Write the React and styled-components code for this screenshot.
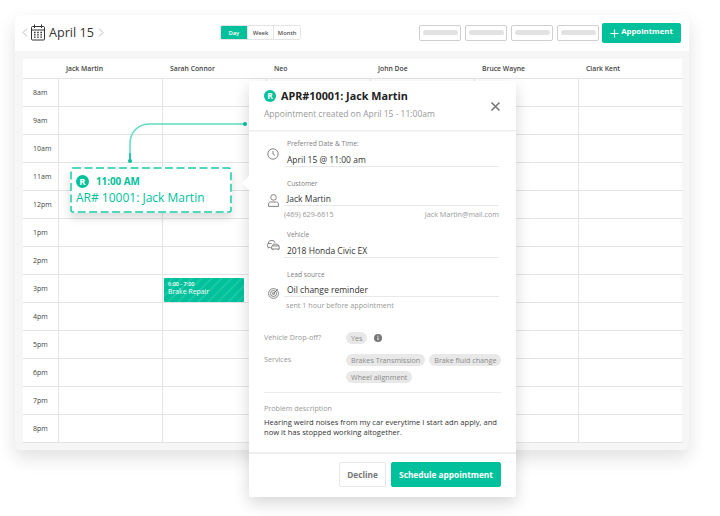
import React from 'react';
import styled, { createGlobalStyle } from 'styled-components';

const GREEN = '#00c19c';
const HOURS = ['8am', '9am', '10am', '11am', '12pm', '1pm', '2pm', '3pm', '4pm', '5pm', '6pm', '7pm', '8pm'];
const PEOPLE = ['Jack Martin', 'Sarah Connor', 'Neo', 'John Doe', 'Bruce Wayne', 'Clark Kent'];

const Global = createGlobalStyle`
  html, body { margin: 0; padding: 0; background: #fff; }
  body { font-family: "Open Sans", "Liberation Sans", sans-serif; color: #333; overflow: hidden; }
  * { box-sizing: border-box; }
`;

const Page = styled.div`
  position: relative;
  width: 720px;
  height: 516px;
  padding: 15px 31px 0 15px;
`;

const Card = styled.div`
  width: 674px;
  height: 435px;
  border-radius: 6px;
  background: #f6f6f6;
  box-shadow: 0 8px 18px rgba(0, 0, 0, 0.12);
  display: flex;
  flex-direction: column;
  overflow: hidden;
`;

const Toolbar = styled.div`
  height: 36px;
  flex: none;
  background: #fff;
  display: flex;
  align-items: center;
  padding: 0 8px 1px 7px;
`;

const Title = styled.div`
  display: flex;
  align-items: center;
  width: 198px;
  font-size: 12.6px;
  color: #333;
`;

const DateText = styled.span`
  margin: 0 4px 0 3px;
`;

const Segments = styled.div`
  display: flex;
  height: 15px;
  border: 1px solid #e4e4e4;
  border-radius: 2px;
  width: 81px;
  overflow: hidden;
`;

const Segment = styled.div`
  flex: 1;
  font-size: 5.9px;
  font-weight: 600;
  display: flex;
  align-items: center;
  justify-content: center;
  background: ${p => (p.$active ? GREEN : '#fff')};
  color: ${p => (p.$active ? '#fff' : '#555')};
  & + & { border-left: 1px solid #e4e4e4; }
`;

const Placeholders = styled.div`
  margin-left: auto;
  display: flex;
  gap: 4px;
  margin-right: 3px;
`;

const Placeholder = styled.div`
  width: 42px;
  height: 16px;
  border: 1px solid #cfcfcf;
  border-radius: 2px;
  display: flex;
  align-items: center;
  justify-content: center;
  &::before {
    content: '';
    width: 35px;
    height: 5px;
    border-radius: 3px;
    background: #e2e2e2;
  }
`;

const AddButton = styled.div`
  width: 79px;
  height: 20px;
  border-radius: 2px;
  background: ${GREEN};
  color: #fff;
  font-size: 7.8px;
  font-weight: 700;
  display: flex;
  align-items: center;
  justify-content: center;
  gap: 2px;
  line-height: 1;
`;

const AddLabel = styled.span`
  margin-bottom: 1px;
`;

const Board = styled.div`
  margin: 8px 7px 0 8px;
  background: #fff;
  display: grid;
  grid-template-columns: 36px repeat(6, 104px);
  grid-template-rows: 20px repeat(13, 28px);
  width: 659px;
`;

const HeadCell = styled.div`
  font-size: 6.8px;
  font-weight: 600;
  color: #444;
  padding-left: 7px;
  display: flex;
  align-items: center;
  white-space: nowrap;
  border-bottom: 1px solid #e4e4e4;
`;

const TimeCell = styled.div`
  font-size: 7px;
  color: #444;
  padding-left: 10px;
  display: flex;
  align-items: center;
  border-bottom: 1px solid #e4e4e4;
  border-right: 1px solid #e4e4e4;
`;

const Slot = styled.div`
  border-bottom: 1px solid #e4e4e4;
  border-right: 1px solid #e4e4e4;
  padding: 3px 1px 1px 1px;
  &:nth-child(7n) { border-right: 0; }
`;

const EventBlock = styled.div`
  width: 80px;
  height: 24px;
  border-radius: 1px;
  color: #fff;
  padding: 2px 0 0 4px;
  background: repeating-linear-gradient(135deg, ${GREEN} 0 5px, #19c9a6 5px 7px);
  line-height: 8px;
`;

const EventTime = styled.div`
  font-size: 5.5px;
  font-weight: 600;
`;

const EventName = styled.div`
  font-size: 6.9px;
  font-weight: 500;
`;

const Connector = styled.svg`
  position: absolute;
  left: 120px;
  top: 115px;
`;

const Selected = styled.div`
  position: absolute;
  left: 70px;
  top: 167px;
  width: 162px;
  height: 46px;
  background: #fff;
  border-radius: 3px;
  box-shadow: 0 5px 9px rgba(0, 0, 0, 0.14);
  color: ${GREEN};
  padding: 8px 0 0 6px;
`;

const DashFrame = styled.svg`
  position: absolute;
  inset: 0;
`;

const SelectedTime = styled.div`
  display: flex;
  align-items: center;
  gap: 7px;
  font-size: 9.8px;
  font-weight: 700;
  height: 13px;
`;

const SelectedName = styled.div`
  font-size: 12px;
  font-weight: 500;
  line-height: 16px;
  margin-top: 2px;
  white-space: nowrap;
`;

const Badge = styled.span`
  width: ${p => p.$size}px;
  height: ${p => p.$size}px;
  border-radius: 50%;
  background: ${GREEN};
  color: #fff;
  font-size: ${p => p.$size - 3.5}px;
  font-weight: 700;
  display: inline-flex;
  align-items: center;
  justify-content: center;
  flex: none;
`;

const Modal = styled.div`
  position: absolute;
  left: 249px;
  top: 81px;
  width: 267px;
  height: 416px;
  background: #fff;
  border-radius: 2px;
  box-shadow: 0 6px 16px rgba(0, 0, 0, 0.16);
  display: flex;
  flex-direction: column;
  &::before {
    content: '';
    position: absolute;
    left: -7px;
    top: 95px;
    border-style: solid;
    border-width: 7px 7px 7px 0;
    border-color: transparent #fff transparent transparent;
  }
`;

const ModalHead = styled.div`
  position: relative;
  height: 50px;
  flex: none;
  padding: 7px 15px 0;
  border-bottom: 1px solid #eeeeee;
  box-shadow: 0 1px 1px rgba(0, 0, 0, 0.03);
`;

const ModalTitle = styled.div`
  display: flex;
  align-items: center;
  gap: 5px;
  font-size: 10.8px;
  font-weight: 700;
  color: #222;
  height: 15px;
`;

const ModalSub = styled.div`
  font-size: 8.5px;
  color: #999;
  margin-top: 5px;
  white-space: nowrap;
`;

const Close = styled.svg`
  position: absolute;
  right: 15px;
  top: 20px;
`;

const ModalBody = styled.div`
  flex: 1;
  padding: 0 15px;
`;

const FieldRow = styled.div`
  display: flex;
  margin-top: ${p => p.$top}px;
`;

const IconSlot = styled.div`
  width: 20px;
  flex: none;
  padding-top: ${p => p.$top}px;
  padding-left: ${p => p.$left}px;
  svg { display: block; }
`;

const Field = styled.div`
  flex: 1;
  margin-right: 2px;
`;

const FieldLabel = styled.div`
  font-size: 6.7px;
  line-height: 10px;
  color: #808080;
  padding-left: 3px;
`;

const FieldValue = styled.div`
  font-size: 8.5px;
  line-height: 12px;
  color: #333;
  padding: ${p => p.$pad}px 0 0 3px;
  border-bottom: 1px solid #e8e8e8;
`;

const FieldHint = styled.div`
  display: flex;
  justify-content: space-between;
  font-size: 7.2px;
  line-height: 10px;
  color: #999;
  margin-top: 3px;
  padding-left: ${p => p.$pad || 0}px;
`;

const MetaRow = styled.div`
  display: flex;
  margin-top: ${p => p.$top}px;
`;

const MetaLabel = styled.div`
  width: 82px;
  font-size: 7.2px;
  line-height: 10px;
  color: #999;
  flex: none;
`;

const Chips = styled.div`
  display: flex;
  flex: none;
  flex-wrap: wrap;
  align-items: center;
  gap: 5px 4px;
  width: 160px;
`;

const Chip = styled.span`
  height: 12px;
  padding: 0 5px;
  border-radius: 6px;
  background: #e8e8e8;
  color: #8a8a8a;
  font-size: 7.2px;
  line-height: 12px;
  white-space: nowrap;
`;

const Divider = styled.div`
  height: 1px;
  background: #ececec;
  margin-top: 9px;
`;

const ProblemLabel = styled.div`
  font-size: 7.2px;
  line-height: 10px;
  color: #999;
  margin-top: 10px;
`;

const ProblemText = styled.div`
  font-size: 7.6px;
  line-height: 9.5px;
  color: #333;
  margin-top: 5px;
  white-space: nowrap;
`;

const ModalFoot = styled.div`
  height: 45px;
  flex: none;
  border-top: 2px solid #eeeeee;
  display: flex;
  justify-content: flex-end;
  gap: 5px;
  padding: 8px 15px 0;
`;

const FootButton = styled.div`
  height: 25px;
  border-radius: 2px;
  font-size: 8.3px;
  font-weight: 700;
  display: flex;
  align-items: center;
  justify-content: center;
  width: ${p => p.$w}px;
  background: ${p => (p.$primary ? GREEN : '#fff')};
  color: ${p => (p.$primary ? '#fff' : '#777')};
  border: 1px solid ${p => (p.$primary ? GREEN : '#e8e8e8')};
`;

const Chevron = ({ flip }) => (
  <svg width="6" height="9" viewBox="0 0 6 9" fill="none" stroke="#aaa" strokeWidth="0.8">
    <path d={flip ? 'M1 .5l4 4-4 4' : 'M5 .5l-4 4 4 4'} />
  </svg>
);

const CalendarIcon = () => (
  <svg width="16" height="17" viewBox="0 0 16 17" fill="none" stroke="#333" strokeWidth="1" style={{ margin: '0 0 0 2px' }}>
    <rect x="1.5" y="2.5" width="13" height="13.5" rx="1" />
    <path d="M1.5 6h13M4.5 .5v3.5M11.5 .5v3.5" />
    <path d="M4 8.5h1.6M7.2 8.5h1.6M10.4 8.5H12M4 10.8h1.6M7.2 10.8h1.6M10.4 10.8H12M4 13.1h1.6M7.2 13.1h1.6M10.4 13.1H12" strokeWidth="1.3" />
  </svg>
);

const ClockIcon = () => (
  <svg width="12" height="12" viewBox="0 0 12 12" fill="none" stroke="#666" strokeWidth="0.8">
    <circle cx="6" cy="6" r="5.2" />
    <path d="M6 2.8V6l2 1.4" />
  </svg>
);

const PersonIcon = () => (
  <svg width="11" height="13" viewBox="0 0 11 13" fill="none" stroke="#666" strokeWidth="0.8">
    <circle cx="5.5" cy="3.4" r="2.8" />
    <path d="M.6 12.4V10c0-1.2 1-2 2-2h5.800c1 0 2 .8 2 2v2.400z" />
  </svg>
);

// two overlapping cars, the rear one cut off by the front one
const CarsIcon = () => (
  <svg width="13" height="11" viewBox="0 0 13 11" fill="none" stroke="#666" strokeWidth="0.8">
    <path d="M3.600 7.400H1.400c-.5 0-.8-.3-.8-.8V4.400c0-.4.2-.7.500-.9l1-2.200c.2-.4.5-.7 1-.7h3.200c.5 0 .8.300 1 .7l.6 1.500" />
    <path d="M1.100 3.500h3.500M1.600 7.400v1" />
    <path d="M4.600 9V6.800c0-.4.2-.7.500-.9l.8-1.300c.2-.3.4-.4.800-.4h3.400c.4 0 .6.100.8.400l.8 1.300c.3.200.5.500.5.900V9z" />
    <path d="M5.100 5.900h7.100M5.800 9v1.200M11.400 9v1.200" />
  </svg>
);

const TargetIcon = () => (
  <svg width="11" height="11" viewBox="0 0 11 11" fill="none" stroke="#666" strokeWidth="0.8">
    <circle cx="5.500" cy="5.500" r="4.900" />
    <circle cx="5.500" cy="5.500" r="3" />
    <circle cx="5.500" cy="5.500" r="1.100" />
    <path d="M5.500 5.500L10 1" />
  </svg>
);

const InfoIcon = () => (
  <svg width="8" height="8" viewBox="0 0 8 8" style={{ marginLeft: 3 }}>
    <circle cx="4" cy="4" r="4" fill="#777" />
    <path d="M4 3.400v2.800M4 1.700v1" stroke="#fff" strokeWidth="1" />
  </svg>
);

export default function App() {
  return (
    <Page>
      <Global />
      <Card>
        <Toolbar>
          <Title>
            <Chevron />
            <CalendarIcon />
            <DateText>April 15</DateText>
            <Chevron flip />
          </Title>
          <Segments>
            <Segment $active>Day</Segment>
            <Segment>Week</Segment>
            <Segment>Month</Segment>
          </Segments>
          <Placeholders>
            <Placeholder />
            <Placeholder />
            <Placeholder />
            <Placeholder />
          </Placeholders>
          <AddButton>
            <svg width="9" height="9" viewBox="0 0 9 9" stroke="#fff" strokeWidth="1.200" style={{ marginTop: 2 }}>
              <path d="M4.500 .5v8M.5 4.500h8" />
            </svg>
            <AddLabel>Appointment</AddLabel>
          </AddButton>
        </Toolbar>
        <Board>
          <HeadCell />
          {PEOPLE.map(name => (
            <HeadCell key={name}>{name}</HeadCell>
          ))}
          {HOURS.map(hour => (
            <React.Fragment key={hour}>
              <TimeCell>{hour}</TimeCell>
              {PEOPLE.map((name, col) => (
                <Slot key={name}>
                  {hour === '3pm' && col === 1 && (
                    <EventBlock>
                      <EventTime>6:00 - 7:00</EventTime>
                      <EventName>Brake Repair</EventName>
                    </EventBlock>
                  )}
                </Slot>
              ))}
            </React.Fragment>
          ))}
        </Board>
      </Card>

      <Connector width="130" height="50" viewBox="0 0 130 50" fill="none">
        <path d="M10 46V29C10 17 18 9 30 9H125" stroke="#5fdcc3" strokeWidth="1.500" />
        <path d="M10 46V38" stroke={GREEN} strokeWidth="1.500" />
        <circle cx="10" cy="46" r="2" fill={GREEN} />
        <circle cx="125" cy="9" r="2" fill={GREEN} />
      </Connector>

      <Selected>
        <DashFrame width="162" height="46" viewBox="0 0 162 46" fill="none">
          <rect x="1" y="1" width="160" height="44" rx="2" stroke="#14cba7" strokeWidth="1.500" strokeDasharray="8 3.500" />
        </DashFrame>
        <SelectedTime>
          <Badge $size={13}>R</Badge>
          11:00 AM
        </SelectedTime>
        <SelectedName>AR# 10001: Jack Martin</SelectedName>
      </Selected>

      <Modal>
        <ModalHead>
          <ModalTitle>
            <Badge $size={12}>R</Badge>
            APR#10001: Jack Martin
          </ModalTitle>
          <ModalSub>Appointment created on April 15 - 11:00am</ModalSub>
          <Close width="11" height="11" viewBox="0 0 11 11" stroke="#777" strokeWidth="1.600">
            <path d="M1.500 1.500l8 8M9.500 1.500l-8 8" />
          </Close>
        </ModalHead>
        <ModalBody>
          <FieldRow $top={8}>
            <IconSlot $top={9} $left={3}><ClockIcon /></IconSlot>
            <Field>
              <FieldLabel>Preferred Date &amp; Time:</FieldLabel>
              <FieldValue $pad={5}>April 15 @ 11:00 am</FieldValue>
            </Field>
          </FieldRow>
          <FieldRow $top={12}>
            <IconSlot $top={15} $left={4}><PersonIcon /></IconSlot>
            <Field>
              <FieldLabel>Customer</FieldLabel>
              <FieldValue $pad={4}>Jack Martin</FieldValue>
              <FieldHint>
                <span>(469) 629-6615</span>
                <span>Jack Martin@mail.com</span>
              </FieldHint>
            </Field>
          </FieldRow>
          <FieldRow $top={11}>
            <IconSlot $top={10} $left={3}><CarsIcon /></IconSlot>
            <Field>
              <FieldLabel>Vehicle</FieldLabel>
              <FieldValue $pad={5}>2018 Honda Civic EX</FieldValue>
            </Field>
          </FieldRow>
          <FieldRow $top={12}>
            <IconSlot $top={18} $left={4}><TargetIcon /></IconSlot>
            <Field>
              <FieldLabel>Lead source</FieldLabel>
              <FieldValue $pad={4}>Oil change reminder</FieldValue>
              <FieldHint $pad={2}>sent 1 hour before appointment</FieldHint>
            </Field>
          </FieldRow>
          <MetaRow $top={22}>
            <MetaLabel>Vehicle Drop-off?</MetaLabel>
            <Chips>
              <Chip>Yes</Chip>
              <InfoIcon />
            </Chips>
          </MetaRow>
          <MetaRow $top={10}>
            <MetaLabel>Services</MetaLabel>
            <Chips>
              <Chip>Brakes Transmission</Chip>
              <Chip>Brake fluid change</Chip>
              <Chip>Wheel alignment</Chip>
            </Chips>
          </MetaRow>
          <Divider />
          <ProblemLabel>Problem description</ProblemLabel>
          <ProblemText>
            Hearing weird noises from my car everytime I start adn apply, and
            <br />
            now it has stopped working altogether.
          </ProblemText>
        </ModalBody>
        <ModalFoot>
          <FootButton $w={47}>Decline</FootButton>
          <FootButton $primary $w={110}>Schedule appointment</FootButton>
        </ModalFoot>
      </Modal>
    </Page>
  );
}
